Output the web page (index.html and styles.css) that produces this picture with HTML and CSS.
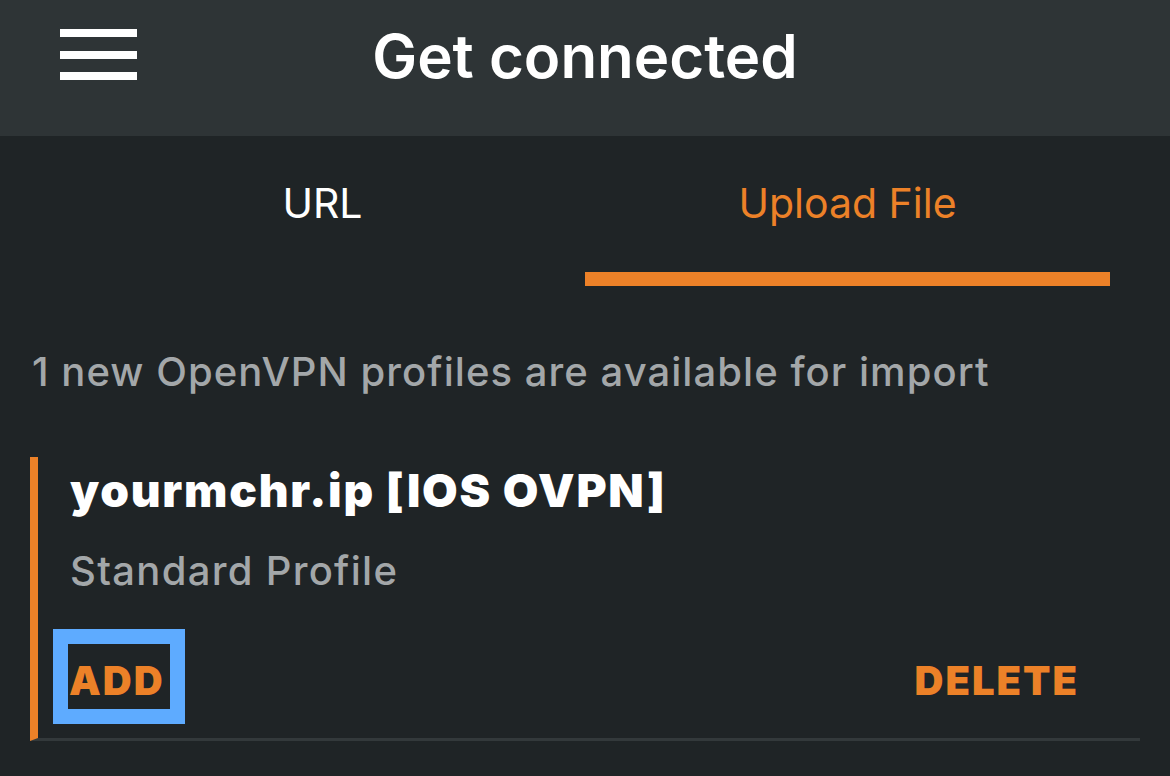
FILE: index.html
```html
<!DOCTYPE html>
<html lang="en">
<head>
<meta charset="utf-8">
<title>Get connected</title>
<link rel="stylesheet" href="styles.css">
</head>
<body>
<header class="topbar">
  <button class="menu-btn" aria-label="Menu">
    <span class="bar"></span><span class="bar"></span><span class="bar"></span>
  </button>
  <h1 class="title">Get connected</h1>
</header>
<nav class="tabs">
  <div class="tab">URL</div>
  <div class="tab active">Upload File</div>
</nav>
<main class="content">
  <p class="notice">1 new OpenVPN profiles are available for import</p>
  <section class="card">
    <div class="card-title">yourmchr.ip [IOS OVPN]</div>
    <div class="card-sub">Standard Profile</div>
    <div class="actions">
      <button class="action focused">ADD</button>
      <button class="action">DELETE</button>
    </div>
  </section>
</main>
</body>
</html>
```
FILE: styles.css
```css
* { box-sizing: border-box; }
html, body { margin: 0; padding: 0; }
body {
  width: 1170px;
  height: 776px;
  overflow: hidden;
  background: #1f2426;
  font-family: Inter, "Noto Sans", "Liberation Sans", sans-serif;
  color: #fff;
}
.topbar {
  position: relative;
  height: 136px;
  background: #2e3436;
  display: flex;
  align-items: center;
  justify-content: center;
}
.menu-btn {
  position: absolute;
  left: 60px;
  top: 29px;
  width: 77px;
  height: 51px;
  padding: 0;
  border: 0;
  background: none;
  display: flex;
  flex-direction: column;
  justify-content: space-between;
}
.bar { display: block; height: 8px; background: #fff; }
.title {
  margin: 0;
  font-size: 60px;
  font-weight: 600;
  margin-top: -24px;
}
.tabs {
  display: flex;
  margin: 0 60px;
  height: 150px;
}
.tab {
  flex: 1;
  display: flex;
  justify-content: center;
  padding-top: 42px;
  font-size: 41px;
  color: #fff;
  border-bottom: 14px solid transparent;
}
.tab.active {
  color: #ec8128;
  border-bottom-color: #ec8128;
}
.content { padding: 0 30px; }
.notice {
  margin: 62px 0 0 2px;
  font-size: 40px;
  font-weight: 500;
  letter-spacing: 1.05px;
  color: #a3a7a9;
  line-height: 48px;
}
.card {
  margin-top: 61px;
  border-left: 8px solid #ec8128;
  border-bottom: 3px solid #33393b;
  padding: 6px 0 14px 32px;
}
.card-title {
  font-size: 46px;
  font-weight: 900;
  letter-spacing: 1.75px;
  line-height: 54px;
}
.card-sub {
  margin-top: 30px;
  font-size: 40px;
  font-weight: 500;
  letter-spacing: 1.3px;
  color: #a3a7a9;
  line-height: 48px;
}
.actions {
  margin-top: 34px;
  margin-left: -17px;
  display: flex;
  justify-content: space-between;
  align-items: center;
  padding-right: 41px;
}
.action {
  border: 15px solid transparent;
  background: none;
  color: #ec8128;
  font-family: inherit;
  font-size: 40px;
  font-weight: 900;
  letter-spacing: 2px;
  line-height: 48px;
  padding: 13px 5px 4px 1px;
}
.action.focused { border-color: #5eabff; }
```
